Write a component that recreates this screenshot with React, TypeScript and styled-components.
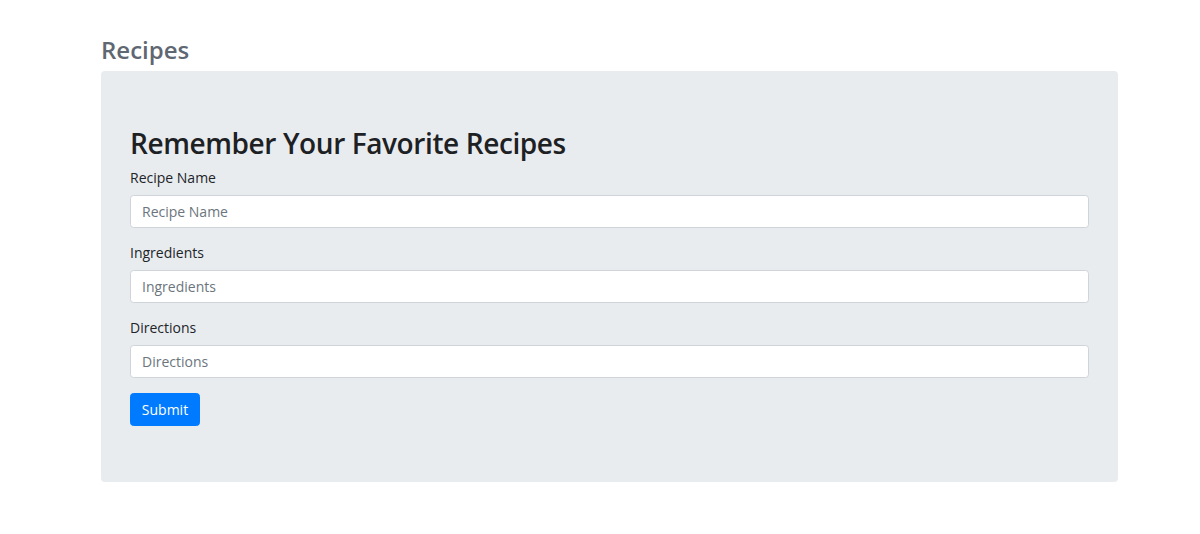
import React from "react";
import styled, { createGlobalStyle } from "styled-components";

const Global = createGlobalStyle`
  html, body { margin: 0; padding: 0; background: #fff; }
  body {
    font-family: "Open Sans", "Noto Sans", sans-serif;
    color: #212529;
    font-size: 14px;
    line-height: 1.5;
  }
  * { box-sizing: border-box; }
`;

const Page = styled.div`
  padding: 30px 0 0 101px;
  width: 1118px;
`;

const PageTitle = styled.h3`
  margin: 0;
  height: 41px;
  font-size: 24px;
  font-weight: 600;
  line-height: 40px;
  color: #5f6872;
`;

const Jumbotron = styled.section`
  background: #e9ecef;
  border-radius: 4px;
  padding: 56px 29px 56px 29px;
`;

const Heading = styled.h1`
  margin: 0 0 6px 0;
  font-size: 28px;
  font-weight: 600;
  letter-spacing: -0.4px;
  line-height: 1.2;
  color: #1d2124;
`;

const Form = styled.form`
  display: flex;
  flex-direction: column;
  align-items: stretch;
`;

const FormGroup = styled.div`
  display: flex;
  flex-direction: column;
  margin-bottom: 14px;
`;

const Label = styled.label`
  font-size: 14px;
  line-height: 21px;
  margin-bottom: 7px;
  color: #212529;
`;

const Input = styled.input`
  height: 33px;
  padding: 0 11px;
  font-family: inherit;
  font-size: 14px;
  color: #495057;
  background: #fff;
  border: 1px solid #ced4da;
  border-radius: 3.5px;
  outline: none;
  &::placeholder { color: #6c757d; opacity: 1; }
`;

const Button = styled.button`
  align-self: flex-start;
  margin-top: 1px;
  width: 70px;
  height: 33px;
  padding: 0;
  font-family: inherit;
  font-size: 14px;
  color: #fff;
  background: #007bff;
  border: 1px solid #007bff;
  border-radius: 3.5px;
`;

const fields = ["Recipe Name", "Ingredients", "Directions"];

export default function App() {
  return (
    <>
      <Global />
      <Page>
        <PageTitle>Recipes</PageTitle>
        <Jumbotron>
          <Heading>Remember Your Favorite Recipes</Heading>
          <Form onSubmit={(e) => e.preventDefault()}>
            {fields.map((f) => (
              <FormGroup key={f}>
                <Label>{f}</Label>
                <Input placeholder={f} />
              </FormGroup>
            ))}
            <Button type="submit">Submit</Button>
          </Form>
        </Jumbotron>
      </Page>
    </>
  );
}
